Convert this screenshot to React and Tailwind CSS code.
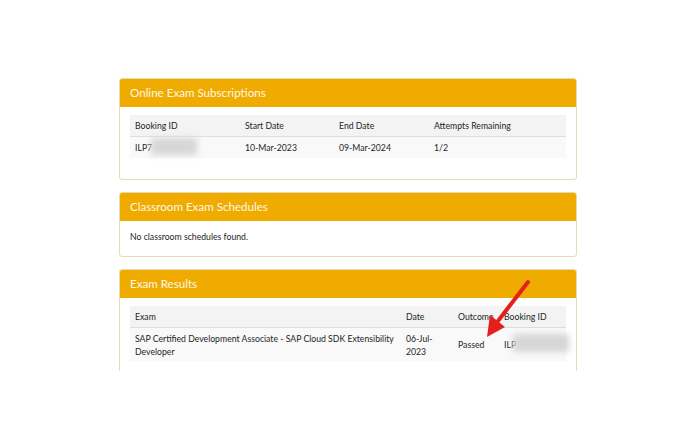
import React from "react";

function Card({ title, children, className = "" }) {
  return (
    <div className={"border border-[#e6dcae] rounded-[3px] bg-white " + className}>
      <div className="bg-[#efab00] h-[28px] flex items-center px-[10px] pb-[1px] rounded-t-[2px]">
        <span className="text-[11.6px] text-[#fff7e6]">{title}</span>
      </div>
      {children}
    </div>
  );
}

function Blur({ className }) {
  return <div className={"absolute bg-[#d6d6d6] blur-[3px] " + className} />;
}

export default function App() {
  return (
    <div className="relative w-[700px] h-[440px] bg-white text-[#1e1e1e] overflow-hidden" style={{ fontFamily: "Lato, 'Open Sans', sans-serif" }}>
      <div className="pt-[78px] pl-[119px] w-[577px] flex flex-col gap-[12px]">
        <Card title="Online Exam Subscriptions" className="h-[102px]">
          <div className="px-[10px] pt-[8px] text-[8.7px]">
            <div className="grid grid-cols-[110px_94px_95px_1fr] bg-[#f3f3f3] h-[22px] items-center border-b border-[#dedede]">
              <div className="pl-[5px]">Booking ID</div>
              <div className="pl-[5px]">Start Date</div>
              <div className="pl-[5px]">End Date</div>
              <div className="pl-[5px]">Attempts Remaining</div>
            </div>
            <div className="grid grid-cols-[110px_94px_95px_1fr] bg-[#f9f9f9] h-[21px] items-center">
              <div className="pl-[5px] relative">ILP7<Blur className="left-[21px] top-[-3px] w-[46px] h-[17px]" /></div>
              <div className="pl-[5px]">10-Mar-2023</div>
              <div className="pl-[5px]">09-Mar-2024</div>
              <div className="pl-[5px]">1/2</div>
            </div>
          </div>
        </Card>
        <Card title="Classroom Exam Schedules" className="h-[65px]">
          <div className="px-[10px] pt-[9px] text-[8.7px]">No classroom schedules found.</div>
        </Card>
        <Card title="Exam Results" className="h-[102px] border-b-0 rounded-b-none">
          <div className="px-[10px] pt-[8px] text-[8.7px]">
            <div className="grid grid-cols-[271px_52px_46px_1fr] bg-[#f3f3f3] h-[22px] items-center border-b border-[#dedede]">
              <div className="pl-[5px]">Exam</div>
              <div className="pl-[5px]">Date</div>
              <div className="pl-[5px]">Outcome</div>
              <div className="pl-[5px]">Booking ID</div>
            </div>
            <div className="grid grid-cols-[271px_52px_46px_1fr] bg-[#f9f9f9] h-[33px] items-center leading-[13px]">
              <div className="pl-[5px]">SAP Certified Development Associate - SAP Cloud SDK Extensibility Developer</div>
              <div className="pl-[5px]">06-Jul-<br />2023</div>
              <div className="pl-[5px]">Passed</div>
              <div className="pl-[5px] relative">ILP<Blur className="left-[14px] top-[-4px] w-[56px] h-[18px]" /></div>
            </div>
          </div>
        </Card>
      </div>
      <svg className="absolute left-0 top-0" width="700" height="440" viewBox="0 0 700 440">
        <line x1="528" y1="282" x2="498" y2="321" stroke="#e3201b" strokeWidth="4" strokeLinecap="round" />
        <polygon points="487,337 505,327 490,315" fill="#e3201b" />
      </svg>
    </div>
  );
}
